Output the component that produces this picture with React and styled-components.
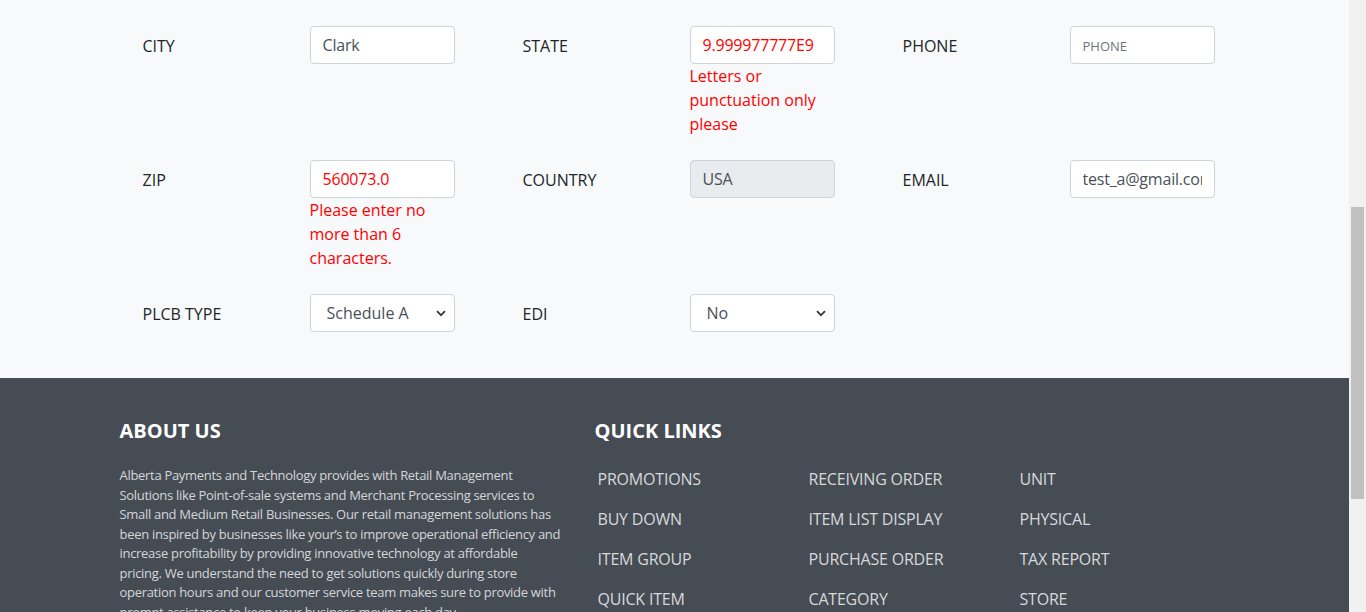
import { useLayoutEffect, useRef } from "react";
import styled, { createGlobalStyle } from "styled-components";

const GlobalStyle = createGlobalStyle`
  html, body {
    margin: 0;
    padding: 0;
    scroll-behavior: auto;
  }
  body {
    background: #f8f9fa;
    font-family: "Open Sans", "Noto Sans", sans-serif;
    font-size: 16px;
    line-height: 1.5;
    color: #212529;
    padding-right: 17px;
  }
  * {
    box-sizing: border-box;
  }
`;

const ScrollTrack = styled.div`
  position: fixed;
  top: 0;
  right: 0;
  width: 17px;
  height: 100vh;
  background: #f1f1f1;
  z-index: 10;
`;

const ScrollThumb = styled.div`
  position: absolute;
  left: 2px;
  top: 207px;
  width: 13px;
  height: 292px;
  background: #c1c1c1;
`;

const TopBar = styled.header`
  height: 60px;
  background: #343a40;
  color: #fff;
  display: flex;
  align-items: center;
  padding: 0 24px;
  font-weight: 700;
  font-size: 18px;
`;

const FormSection = styled.section`
  padding: 30px 0 22px;
`;

const Container = styled.div`
  width: 1140px;
  margin: 0 auto;
  padding: 0 15px;
`;

const PageTitle = styled.h4`
  margin: 0 0 24px 22px;
  font-size: 24px;
  line-height: 40px;
  font-weight: 600;
`;

const FormRow = styled.div`
  display: grid;
  grid-template-columns: repeat(3, 380px);
  margin: 0 -15px ${(p) => p.$gap || 24}px;
  align-items: start;
`;

const Field = styled.div`
  display: grid;
  grid-template-columns: 167px 145px;
  padding-left: 38px;
  align-items: start;
`;

const Label = styled.label`
  height: 38px;
  padding-top: 2px;
  display: flex;
  align-items: center;
  text-transform: uppercase;
  color: #212529;
`;

const Input = styled.input`
  width: 145px;
  height: 38px;
  padding: 6px 12px;
  font-family: inherit;
  font-size: 16px;
  letter-spacing: -0.2px;
  color: ${(p) => (p.$invalid ? "#ff0000" : "#495057")};
  background: ${(p) => (p.disabled ? "#e9ecef" : "#fff")};
  border: 1px solid #ced4da;
  border-radius: 4px;
  outline: none;

  &::placeholder {
    font-size: 13px;
    letter-spacing: 0;
    color: #6c757d;
  }
`;

const ErrorText = styled.div`
  color: #ff0000;
  font-size: 16px;
  line-height: 24px;
`;

const SelectWrap = styled.div`
  position: relative;
  width: 145px;
  height: 38px;
`;

const Select = styled.select`
  appearance: none;
  width: 100%;
  height: 38px;
  padding: 6px 28px 6px 16px;
  font-family: inherit;
  font-size: 16px;
  color: #495057;
  background: #fff;
  border: 1px solid #ced4da;
  border-radius: 4px;
  outline: none;
`;

const Chevron = styled.svg`
  position: absolute;
  right: 9px;
  top: 16px;
  width: 10px;
  height: 7px;
  pointer-events: none;
`;

const Footer = styled.footer`
  background: #464c54;
  padding: 41px 0 90px;
  color: #d3d6d9;
`;

const FooterRow = styled.div`
  display: grid;
  grid-template-columns: 475px 665px;
  margin: 0 -15px;
`;

const FooterCol = styled.div`
  padding: 0 15px;
`;

const FooterHeading = styled.h5`
  margin: 0 0 23px;
  font-size: 20px;
  line-height: 24px;
  font-weight: 700;
  color: #fff;
  text-transform: uppercase;
`;

const AboutText = styled.p`
  margin: 0;
  font-size: 13px;
  line-height: 19.5px;
  letter-spacing: -0.3px;
  white-space: nowrap;
  color: #d3d6d9;
`;

const LinkGrid = styled.div`
  display: grid;
  grid-template-columns: repeat(3, 211px);
  margin-top: -7px;
  padding-left: 3px;
`;

const FooterLink = styled.a`
  display: block;
  padding: 8px 0;
  line-height: 24px;
  font-size: 16px;
  letter-spacing: -0.2px;
  color: #d6d8db;
  text-decoration: none;
  text-transform: uppercase;
`;

const Copyright = styled.div`
  margin-top: 40px;
  font-size: 13px;
  color: #aab0b6;
  text-align: center;
`;

function TextField({ label, value, placeholder, error, invalid, disabled }) {
  return (
    <Field>
      <Label>{label}</Label>
      <div>
        <Input
          defaultValue={value}
          placeholder={placeholder}
          $invalid={invalid}
          disabled={disabled}
        />
        {error && <ErrorText>{error}</ErrorText>}
      </div>
    </Field>
  );
}

function SelectField({ label, options }) {
  return (
    <Field>
      <Label>{label}</Label>
      <SelectWrap>
        <Select defaultValue={options[0]}>
          {options.map((o) => (
            <option key={o}>{o}</option>
          ))}
        </Select>
        <Chevron viewBox="0 0 10 7">
          <path
            d="M1 1.2 5 5.2 9 1.2"
            fill="none"
            stroke="#343a40"
            strokeWidth="1.8"
          />
        </Chevron>
      </SelectWrap>
    </Field>
  );
}

const links = [
  "Promotions",
  "Receiving Order",
  "Unit",
  "Buy Down",
  "Item List Display",
  "Physical",
  "Item Group",
  "Purchase Order",
  "Tax Report",
  "Quick Item",
  "Category",
  "Store",
  "Sales Report",
  "Vendor",
  "Users",
];

export default function App() {
  const cityRow = useRef(null);

  useLayoutEffect(() => {
    const jump = () => {
      if (!cityRow.current) return;
      const top = cityRow.current.getBoundingClientRect().top + window.scrollY;
      window.scrollTo(0, top - 26);
    };
    jump();
    const t = setTimeout(jump, 50);
    return () => clearTimeout(t);
  }, []);

  return (
    <>
      <GlobalStyle />
      <ScrollTrack>
        <ScrollThumb />
      </ScrollTrack>
      <TopBar>Store Settings</TopBar>
      <FormSection>
        <Container>
          <PageTitle>Store Information</PageTitle>
          <FormRow>
            <TextField label="Store Name" value="Test Store" />
            <TextField label="Store ID" value="1001" />
            <TextField label="Owner" value="Test" />
          </FormRow>
          <FormRow>
            <TextField label="Address 1" value="Main St" />
            <TextField label="Address 2" placeholder="ADDRESS 2" />
            <TextField label="Contact" value="Test A" />
          </FormRow>
          <FormRow>
            <TextField label="License" value="L-2201" />
            <TextField label="Tax Rate" value="6.0" />
            <TextField label="Fax" placeholder="FAX" />
          </FormRow>
          <FormRow>
            <TextField label="Region" value="East" />
            <TextField label="County" value="Clark" />
            <TextField label="Website" placeholder="WEBSITE" />
          </FormRow>
          <FormRow $gap={60}>
            <TextField label="Store Type" value="Retail" />
            <TextField label="Time Zone" value="EST" />
            <TextField label="Mobile" placeholder="MOBILE" />
          </FormRow>
          <FormRow ref={cityRow}>
            <TextField label="City" value="Clark" />
            <TextField
              label="State"
              value="9.999977777E9"
              invalid
              error="Letters or punctuation only please"
            />
            <TextField label="Phone" placeholder="PHONE" />
          </FormRow>
          <FormRow>
            <TextField
              label="Zip"
              value="560073.0"
              invalid
              error="Please enter no more than 6 characters."
            />
            <TextField label="Country" value="USA" disabled />
            <TextField label="Email" value="test_a@gmail.com" />
          </FormRow>
          <FormRow>
            <SelectField label="PLCB Type" options={["Schedule A", "Schedule B"]} />
            <SelectField label="EDI" options={["No", "Yes"]} />
          </FormRow>
        </Container>
      </FormSection>
      <Footer>
        <Container>
          <FooterRow>
            <FooterCol>
              <FooterHeading>About Us</FooterHeading>
              <AboutText>
                Alberta Payments and Technology provides with Retail Management
                <br />
                Solutions like Point-of-sale systems and Merchant Processing services to
                <br />
                Small and Medium Retail Businesses. Our retail management solutions has
                <br />
                been inspired by businesses like your’s to improve operational efficiency and
                <br />
                increase profitability by providing innovative technology at affordable
                <br />
                pricing. We understand the need to get solutions quickly during store
                <br />
                operation hours and our customer service team makes sure to provide with
                <br />
                prompt assistance to keep your business moving each day.
              </AboutText>
            </FooterCol>
            <FooterCol>
              <FooterHeading>Quick Links</FooterHeading>
              <LinkGrid>
                {links.map((l) => (
                  <FooterLink key={l} href="#">
                    {l}
                  </FooterLink>
                ))}
              </LinkGrid>
            </FooterCol>
          </FooterRow>
          <Copyright>© Alberta Payments and Technology. All rights reserved.</Copyright>
        </Container>
      </Footer>
    </>
  );
}
